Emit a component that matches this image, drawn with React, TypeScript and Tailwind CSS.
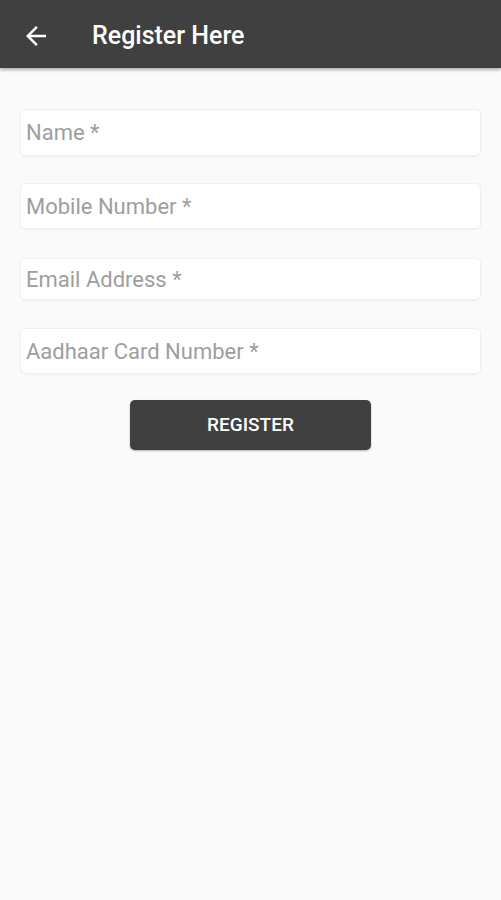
import React from 'react';

const fields = [
  { label: 'Name *', h: 'h-[47px]', mt: 'mt-[41px]' },
  { label: 'Mobile Number *', h: 'h-[46px]', mt: 'mt-[27px]' },
  { label: 'Email Address *', h: 'h-[42px]', mt: 'mt-[29px]' },
  { label: 'Aadhaar Card Number *', h: 'h-[46px]', mt: 'mt-[28px]' },
];

export default function App() {
  return (
    <div className="w-[501px] h-[900px] bg-[#fafafa] flex flex-col" style={{ fontFamily: 'Roboto, "Liberation Sans", sans-serif' }}>
      {/* Toolbar */}
      <div className="h-[68px] bg-[#404040] flex items-center shadow-[0_2px_3px_rgba(0,0,0,0.3)] shrink-0">
        <svg className="ml-[21px] mt-[3px] w-[30px] h-[30px]" viewBox="0 0 24 24" fill="white">
          <path d="M20 11H7.83l5.59-5.59L12 4l-8 8 8 8 1.41-1.41L7.83 13H20v-2z" />
        </svg>
        <span className="ml-[41px] mt-[3px] text-white text-[25px] font-medium leading-none">Register Here</span>
      </div>

      {/* Form */}
      <div className="flex flex-col px-[20px]">
        {fields.map((f) => (
          <div
            key={f.label}
            className={`${f.h} ${f.mt} bg-white rounded-[5px] border border-[#efefef] shadow-[0_1px_1px_rgba(0,0,0,0.04)] flex items-center px-[5px]`}
          >
            <input
              placeholder={f.label}
              className="w-full bg-transparent outline-none text-[22px] text-[#333] placeholder:text-[#9e9e9e]"
            />
          </div>
        ))}
        <div className="flex justify-center mt-[26px]">
          <button className="w-[241px] h-[50px] bg-[#404040] rounded-[5px] text-white text-[19px] font-medium shadow-[0_1px_2px_rgba(0,0,0,0.3)]">
            REGISTER
          </button>
        </div>
      </div>
    </div>
  );
}
